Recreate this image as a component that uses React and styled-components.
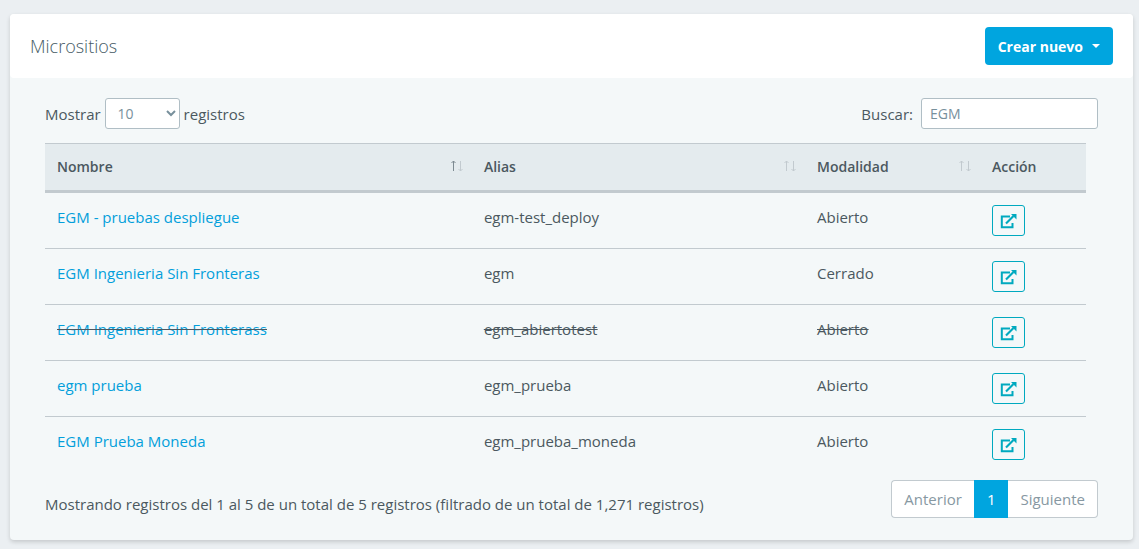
import React, { useState } from 'react';
import styled, { createGlobalStyle } from 'styled-components';

const font = '"Open Sans", "Noto Sans", sans-serif';

const GlobalStyle = createGlobalStyle`
  *, *::before, *::after {
    box-sizing: border-box;
  }
  body {
    margin: 0;
    background: #ebeff2;
    color: #4b5860;
    font: 15px/24px ${font};
  }
  button, input, select {
    font-family: inherit;
  }
`;

const Card = styled.main`
  margin: 14px 6px 8px 10px;
  border-radius: 4px;
  background: #f4f8f9;
  box-shadow: 0 2px 4px rgba(0, 0, 0, 0.16);
`;

const CardHeader = styled.header`
  display: flex;
  align-items: center;
  justify-content: space-between;
  padding: 13px 20px;
  border-radius: 4px;
  background: #fff;
`;

const Title = styled.h1`
  margin: 0;
  color: #455a64;
  font-size: 18px;
  font-weight: 300;
`;

const CreateButton = styled.button`
  display: flex;
  align-items: center;
  gap: 9px;
  height: 38px;
  padding: 0 13px;
  border: 0;
  border-radius: 4px;
  background: #00a5df;
  color: #fff;
  font-size: 14px;
  font-weight: 700;

  &::after {
    content: '';
    border: 4px solid transparent;
    border-top-color: #fff;
    border-bottom: 0;
  }
`;

const CardBody = styled.section`
  padding: 20px 35px 22px;
`;

const Toolbar = styled.div`
  display: flex;
  justify-content: space-between;
  margin-bottom: 14px;
`;

const Field = styled.label`
  display: flex;
  align-items: center;
  gap: ${p => p.$gap};
`;

const LengthSelect = styled.select`
  width: 75px;
  height: 31px;
  padding: 0 0 0 8px;
  border: 1px solid #b0bec5;
  border-radius: 3px;
  background: #fff;
  color: #78909c;
  font-size: 14px;
`;

const SearchInput = styled.input`
  width: 177px;
  height: 31px;
  padding: 0 8px;
  border: 1px solid #b0bec5;
  border-radius: 3px;
  background: #fff;
  color: #78909c;
  font-size: 14px;
`;

const TableWrap = styled.div`
  padding-right: 12px;
`;

const Table = styled.table`
  width: 100%;
  table-layout: fixed;
  border-spacing: 0;
`;

const HeadCell = styled.th`
  width: ${p => p.$width};
  padding: 11px 12px;
  border-top: 1px solid #c2cacf;
  border-bottom: 3px solid #c2cacf;
  background: #e4ebee;
  font-size: 14px;
  font-weight: 600;
  text-align: left;
`;

const HeadInner = styled.div`
  display: flex;
  align-items: center;
  justify-content: space-between;
  margin-right: -4px;
`;

const SortMark = styled.svg`
  flex: none;
  margin-bottom: 3px;
  fill: none;
  stroke: #c2cacf;
`;

const Row = styled.tr`
  text-decoration: ${p => (p.$removed ? 'line-through' : 'none')};

  &:last-child td {
    border-bottom: 0;
  }
`;

const Cell = styled.td`
  padding: 12px;
  border-bottom: 1px solid #c2cacf;
  vertical-align: top;
  text-decoration: inherit;
`;

const SiteLink = styled.a`
  color: #039fdb;
  text-decoration: none;
`;

const OpenButton = styled.button`
  display: flex;
  align-items: center;
  justify-content: center;
  width: 33px;
  height: 31px;
  padding: 0;
  border: 1px solid #00a9bf;
  border-radius: 3px;
  background: transparent;
  color: #00a9bf;
`;

const Footer = styled.footer`
  display: flex;
  justify-content: space-between;
  margin-top: 8px;
`;

const Info = styled.div`
  padding-top: 12px;
`;

const Pagination = styled.nav`
  display: flex;
`;

const PageButton = styled.button`
  height: 38px;
  padding: 0 12px;
  border: 1px solid ${p => (p.$active ? '#00a5df' : '#c2cacf')};
  background: ${p => (p.$active ? '#00a5df' : '#fff')};
  color: ${p => (p.$active ? '#fff' : '#8798a2')};
  font-size: 15px;

  &:first-child {
    border-right: 0;
    border-radius: 4px 0 0 4px;
  }
  &:last-child {
    border-left: 0;
    border-radius: 0 4px 4px 0;
  }
`;

const columns = [
  { label: 'Nombre', width: 'auto', sort: 'asc' },
  { label: 'Alias', width: '32%', sort: 'none' },
  { label: 'Modalidad', width: '175px', sort: 'none' },
  { label: 'Acción', width: '106px' },
];

const sites = [
  { name: 'EGM - pruebas despliegue', alias: 'egm-test_deploy', mode: 'Abierto' },
  { name: 'EGM Ingenieria Sin Fronteras', alias: 'egm', mode: 'Cerrado' },
  { name: 'EGM Ingenieria Sin Fronterass', alias: 'egm_abiertotest', mode: 'Abierto', removed: true },
  { name: 'egm prueba', alias: 'egm_prueba', mode: 'Abierto' },
  { name: 'EGM Prueba Moneda', alias: 'egm_prueba_moneda', mode: 'Abierto' },
];

const SortIcon = ({ sort }) => (
  <SortMark width="14" height="12" viewBox="0 0 14 12" aria-hidden="true">
    <path d="M3.5 11V1M1.5 3l2-2 2 2" stroke={sort === 'asc' ? '#7d8a91' : undefined} />
    <path d="M10.5 1v10M8.5 9l2 2 2-2" />
  </SortMark>
);

const OpenIcon = () => (
  <svg width="17" height="16" viewBox="0 0 17 16" fill="none" stroke="currentColor" strokeWidth="2" aria-hidden="true">
    <path d="M10 3.5H1.8v10.7h10.7V10" />
    <path d="M6 10.5 13.5 3" strokeWidth="2.2" />
    <path d="M11 1h5.5v5.5z" fill="currentColor" stroke="none" />
  </svg>
);

const App = () => {
  const [query, setQuery] = useState('EGM');

  return (
    <>
      <GlobalStyle />
      <Card>
        <CardHeader>
          <Title>Micrositios</Title>
          <CreateButton type="button">Crear nuevo</CreateButton>
        </CardHeader>
        <CardBody>
          <Toolbar>
            <Field $gap="4px">
              Mostrar
              <LengthSelect defaultValue="10">
                <option>10</option>
                <option>25</option>
                <option>50</option>
                <option>100</option>
              </LengthSelect>
              registros
            </Field>
            <Field $gap="8px">
              Buscar:
              <SearchInput type="search" value={query} onChange={e => setQuery(e.target.value)} />
            </Field>
          </Toolbar>
          <TableWrap>
            <Table>
              <thead>
                <tr>
                  {columns.map(col => (
                    <HeadCell key={col.label} $width={col.width} scope="col">
                      <HeadInner>
                        {col.label}
                        {col.sort && <SortIcon sort={col.sort} />}
                      </HeadInner>
                    </HeadCell>
                  ))}
                </tr>
              </thead>
              <tbody>
                {sites.map(site => (
                  <Row key={site.alias} $removed={site.removed}>
                    <Cell>
                      <SiteLink href="#">{site.name}</SiteLink>
                    </Cell>
                    <Cell>{site.alias}</Cell>
                    <Cell>{site.mode}</Cell>
                    <Cell>
                      <OpenButton type="button" aria-label={`Abrir ${site.name}`}>
                        <OpenIcon />
                      </OpenButton>
                    </Cell>
                  </Row>
                ))}
              </tbody>
            </Table>
          </TableWrap>
          <Footer>
            <Info>Mostrando registros del 1 al 5 de un total de 5 registros (filtrado de un total de 1,271 registros)</Info>
            <Pagination aria-label="Paginación">
              <PageButton type="button">Anterior</PageButton>
              <PageButton type="button" $active>1</PageButton>
              <PageButton type="button">Siguiente</PageButton>
            </Pagination>
          </Footer>
        </CardBody>
      </Card>
    </>
  );
};

export default App;
